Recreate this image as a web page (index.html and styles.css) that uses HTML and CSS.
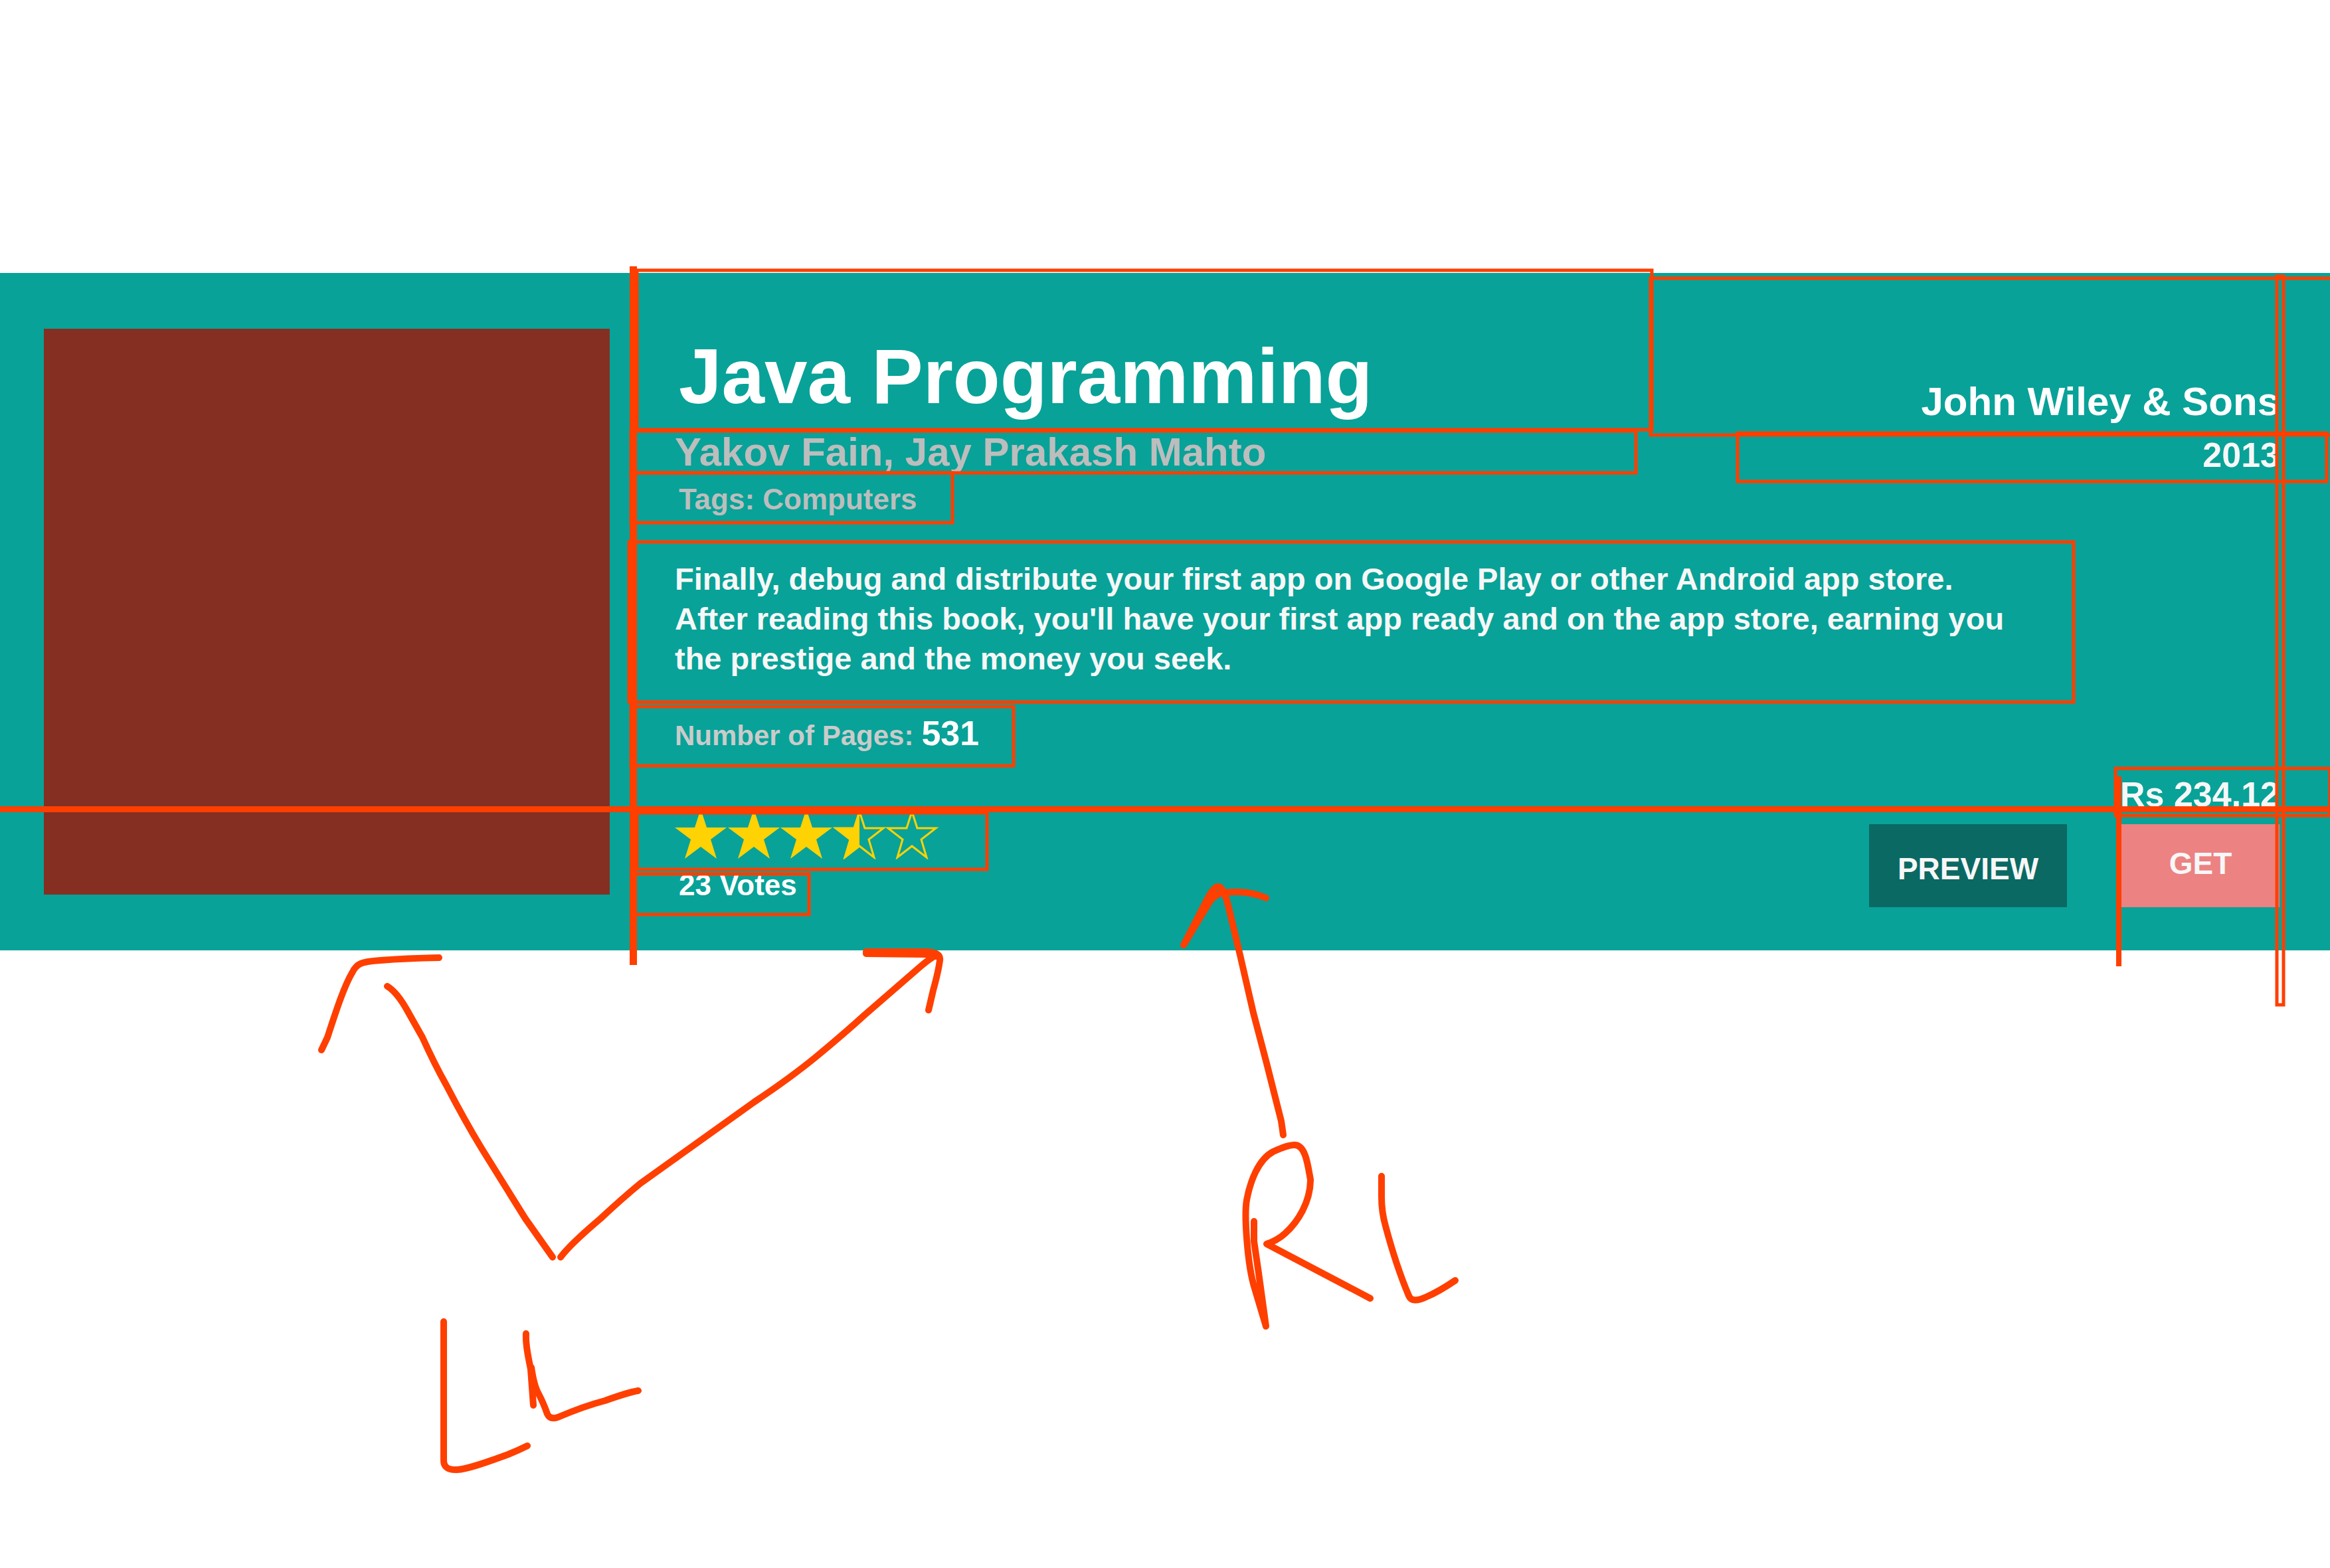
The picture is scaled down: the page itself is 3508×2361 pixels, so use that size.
FILE: index.html
```html
<!DOCTYPE html>
<html lang="en">
<head>
<meta charset="utf-8">
<title>Java Programming</title>
<link rel="stylesheet" href="styles.css">
</head>
<body>
<main class="board">
  <article class="card">
    <div class="cover"></div>
    <div class="body">
      <header class="head">
        <div class="heading">
          <h1 class="title">Java Programming</h1>
          <p class="authors">Yakov Fain, Jay Prakash Mahto</p>
          <p class="tags">Tags: Computers</p>
        </div>
        <div class="imprint">
          <p class="publisher">John Wiley &amp; Sons</p>
          <p class="year">2013</p>
        </div>
      </header>
      <p class="description">Finally, debug and distribute your first app on Google Play or other Android app store.<br>After reading this book, you'll have your first app ready and on the app store, earning you<br>the prestige and the money you seek.</p>
      <p class="pages"><span class="pages-label">Number of Pages:</span><span class="pages-count">531</span></p>
      <footer class="foot">
        <div class="rating">
          <svg class="stars" viewBox="0 0 398 76" role="img" aria-label="3.5 out of 5 stars">
            <defs>
              <path id="star" d="M39 0 L48 28 H78 L54 46 L63 75 L39 57 L15 75 L24 46 L0 28 H30 Z"/>
              <path id="outline" d="M39 4 L47 29 H75 L53 46 L61 73 L39 56 L17 73 L25 46 L3 29 H31 Z"/>
            </defs>
            <use href="#star"/>
            <use href="#star" x="80"/>
            <use href="#star" x="159"/>
            <path d="M278 0 L269 28 H239 L263 46 L254 75 L278 57 Z"/>
            <use href="#outline" class="hollow" x="239"/>
            <use href="#outline" class="hollow" x="318"/>
          </svg>
          <p class="votes">23 Votes</p>
        </div>
        <div class="purchase">
          <p class="price">Rs 234.12</p>
          <div class="actions">
            <button class="button preview" type="button">PREVIEW</button>
            <button class="button get" type="button">GET</button>
          </div>
        </div>
      </footer>
    </div>
  </article>

  <svg class="markup" viewBox="0 0 3508 2361" aria-hidden="true">
    <!-- layout guides -->
    <g class="guides">
      <rect x="948" y="401" width="11" height="1052"/>
      <rect x="0" y="1214" width="3508" height="9"/>
      <rect x="3186" y="1169" width="8" height="286"/>
    </g>
    <!-- element bounds -->
    <g class="bounds">
      <rect x="959" y="407" width="1528" height="240"/>
      <rect x="2485" y="419" width="1040" height="236"/>
      <rect x="950" y="649" width="1513" height="63"/>
      <rect x="950" y="712" width="484" height="75"/>
      <rect x="947" y="816" width="2175" height="241"/>
      <rect x="950" y="1064" width="576" height="89"/>
      <rect x="959" y="1224" width="527" height="85"/>
      <rect x="955" y="1316" width="263" height="61"/>
      <rect x="2616" y="652" width="887" height="73"/>
      <rect x="3428" y="416" width="10" height="1097"/>
      <rect x="3185" y="1157" width="323" height="71"/>
    </g>
    <!-- pen strokes -->
    <g class="pen">
      <path d="M484 1581 L493 1562 C505 1525 518 1485 530 1465 C537 1450 545 1448 573 1446 Q610 1443 661 1442"/>
      <path d="M583 1485 Q598 1494 614 1523 L636 1562 Q654 1602 672 1634 Q700 1688 725 1729 L791 1835 L832 1893"/>
      <path d="M844 1893 Q858 1874 904 1835 Q935 1806 964 1782 L1136 1659 Q1190 1623 1229 1591 Q1268 1559 1302 1528 L1385 1456 Q1400 1443 1410 1438"/>
      <path d="M1304 1433 H1395 Q1417 1434 1415 1446 Q1413 1462 1405 1491 L1398 1521"/>
      <path d="M1304 1436 L1395 1437 L1410 1440"/>
      <path d="M668 1990 V2199 Q668 2214 688 2213 C706 2212 740 2199 765 2190 Q780 2184 794 2177"/>
      <path d="M792 2008 C791 2028 796 2045 799 2062 L803 2116"/>
      <path d="M800 2059 Q804 2087 811 2099 Q818 2112 824 2129 Q828 2138 840 2134 Q880 2117 911 2109 Q944 2097 961 2094"/>
      <path d="M1932 1709 L1929 1688 L1907 1601 L1887 1525 L1867 1438 L1850 1367 Q1842 1334 1834 1335 Q1828 1334 1818 1353 L1782 1423 L1820 1360 Q1830 1344 1845 1344 Q1878 1340 1906 1352"/>
      <path d="M1888 1839 V1869 L1895 1917 L1906 1997 L1889 1940 C1878 1905 1873 1830 1877 1807 C1882 1780 1894 1746 1917 1734 C1932 1727 1943 1724 1949 1724 C1966 1724 1969 1755 1973 1776 C1973 1810 1954 1840 1935 1857 Q1923 1868 1907 1873 L1985 1914 L2063 1955"/>
      <path d="M2080 1771 V1802 Q2080 1825 2086 1846 Q2102 1906 2121 1951 Q2126 1963 2147 1953 Q2166 1945 2191 1928"/>
    </g>
  </svg>
</main>
</body>
</html>
```
FILE: styles.css
```css
* {
  box-sizing: border-box;
}

body {
  margin: 0;
  background: #fff;
  color: #fff;
  font-family: "Liberation Sans", Arial, sans-serif;
  font-weight: 700;
  font-size: 46px;
  line-height: 60px;
}

h1,
p {
  margin: 0;
}

.board {
  position: relative;
  min-height: 100vh;
  padding-top: 411px;
  overflow: hidden;
}

.card {
  display: flex;
  align-items: flex-start;
  gap: 98px;
  padding: 84px 76px 65px 66px;
  background: #08a298;
}

.cover {
  flex: none;
  width: 852px;
  aspect-ratio: 1;
  background: #852f23;
}

.body {
  flex: 1;
  min-width: 0;
}

.head,
.foot {
  display: flex;
  justify-content: space-between;
}

.title {
  padding-left: 6px;
  font-size: 116px;
  line-height: 144px;
}

.authors,
.publisher {
  font-size: 60px;
  line-height: 84px;
}

.authors {
  color: #bdbdbd;
}

.tags {
  padding-left: 6px;
  color: #bdbdbd;
  font-size: 44px;
  line-height: 58px;
}

.imprint {
  padding-top: 68px;
  text-align: right;
}

.year,
.price,
.pages-count {
  font-size: 52px;
}

.year {
  margin-top: 8px;
  color: #f7f7f7;
}

.description {
  margin-top: 61px;
  color: #f7f7f7;
  font-size: 47px;
}

.pages {
  display: flex;
  align-items: baseline;
  gap: 12px;
  margin-top: 52px;
}

.pages-label {
  color: #cbcbcb;
  font-size: 42px;
}

.foot {
  align-items: flex-end;
  margin-top: 28px;
}

.stars {
  display: block;
  width: 398px;
  height: 76px;
  fill: #ffd204;
}

.hollow {
  fill: none;
  stroke: #ffd204;
  stroke-width: 3px;
}

.votes {
  margin-top: 6px;
  padding-left: 6px;
  font-size: 44px;
  line-height: 66px;
}

.price {
  color: #f7f7f7;
  text-align: right;
}

.actions {
  display: flex;
  gap: 82px;
  margin-top: 15px;
}

.button {
  height: 125px;
  padding: 0;
  border: 0;
  color: #f7f7f7;
  font: inherit;
}

.preview {
  width: 298px;
  padding-top: 8px;
  background: #0b6963;
}

.get {
  width: 238px;
  padding-bottom: 8px;
  background: #ec8282;
}

.markup {
  position: absolute;
  top: 0;
  left: 0;
  width: 100%;
  pointer-events: none;
}

.guides {
  fill: #ff3f00;
}

.bounds {
  fill: none;
  stroke: #ff3f00;
  stroke-width: 5px;
}

.pen {
  fill: none;
  stroke: #ff3f00;
  stroke-width: 10px;
  stroke-linecap: round;
  stroke-linejoin: round;
}
```
